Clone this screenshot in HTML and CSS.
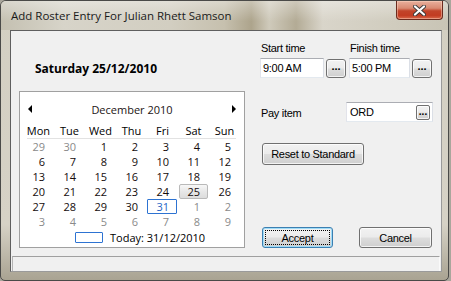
FILE: index.html
```html
<!DOCTYPE html>
<html lang="en">
<head>
    <meta charset="UTF-8">
    <title>Add Roster Entry</title>
    <link rel="stylesheet" href="styles.css">
</head>
<body>

    <div class="window">
        <div class="titlebar">
            <span class="title">Add Roster Entry For Julian Rhett Samson</span>
            <button class="close" type="button">
                <svg width="13" height="11" viewBox="0 0 13 11">
                    <path d="M2 1.5 L11 9.5 M11 1.5 L2 9.5" stroke="#3b3b3b" stroke-width="4" stroke-linecap="round"/>
                    <path d="M2 1.5 L11 9.5 M11 1.5 L2 9.5" stroke="#ffffff" stroke-width="2.2" stroke-linecap="round"/>
                </svg>
            </button>
        </div>

        <div class="client">
            <div class="main">
                <div class="left">
                    <div class="date-heading">Saturday 25/12/2010</div>

                    <div class="calendar">
                        <div class="cal-head">
                            <span class="arrow prev"></span>
                            <span class="month">December 2010</span>
                            <span class="arrow next"></span>
                        </div>
                        <div class="cal-dow">
                            <span>Mon</span><span>Tue</span><span>Wed</span><span>Thu</span><span>Fri</span><span>Sat</span><span>Sun</span>
                        </div>
                        <div class="cal-rule"></div>
                        <div class="cal-days">
                            <span class="day other">29</span><span class="day other">30</span><span class="day">1</span><span class="day">2</span><span class="day">3</span><span class="day">4</span><span class="day">5</span>
                            <span class="day">6</span><span class="day">7</span><span class="day">8</span><span class="day">9</span><span class="day">10</span><span class="day">11</span><span class="day">12</span>
                            <span class="day">13</span><span class="day">14</span><span class="day">15</span><span class="day">16</span><span class="day">17</span><span class="day">18</span><span class="day">19</span>
                            <span class="day">20</span><span class="day">21</span><span class="day">22</span><span class="day">23</span><span class="day">24</span><span class="day selected">25</span><span class="day">26</span>
                            <span class="day">27</span><span class="day">28</span><span class="day">29</span><span class="day">30</span><span class="day today">31</span><span class="day other">1</span><span class="day other">2</span>
                            <span class="day other">3</span><span class="day other">4</span><span class="day other">5</span><span class="day other">6</span><span class="day other">7</span><span class="day other">8</span><span class="day other">9</span>
                        </div>
                        <div class="cal-today">
                            <span class="today-box"></span>
                            <span>Today: 31/12/2010</span>
                        </div>
                    </div>
                </div>

                <div class="right">
                    <div class="times">
                        <div class="time-group">
                            <label>Start time</label>
                            <div class="picker">
                                <div class="field start-field">9:00 AM</div>
                                <button class="btn dots" type="button">...</button>
                            </div>
                        </div>
                        <div class="time-group">
                            <label>Finish time</label>
                            <div class="picker">
                                <div class="field finish-field">5:00 PM</div>
                                <button class="btn dots" type="button">...</button>
                            </div>
                        </div>
                    </div>

                    <div class="pay-row">
                        <label>Pay item</label>
                        <div class="field pay-field">
                            <span>ORD</span>
                            <button class="btn dots small" type="button">...</button>
                        </div>
                    </div>

                    <button class="btn reset" type="button">Reset to Standard</button>

                    <div class="actions">
                        <button class="btn default accept" type="button">Accept</button>
                        <button class="btn cancel" type="button">Cancel</button>
                    </div>
                </div>
            </div>
            <div class="statusbar"></div>
        </div>
    </div>

</body>
</html>
```

FILE: styles.css
```css
body {
    margin: 0;
    background-color: #a9a69c;
    font-family: 'Liberation Sans', Arial, sans-serif;
    font-size: 11px;
    color: #000;
}
button {
    font-family: inherit;
    font-size: inherit;
    color: #000;
    padding: 0;
    margin: 0;
    cursor: default;
}

/* window frame */
.window {
    box-sizing: border-box;
    width: 449px;
    height: 281px;
    border: 1px solid #4a4a48;
    border-radius: 6px 6px 5px 5px;
    background: linear-gradient(180deg, #d3cfc2 0%, #d6d2c6 80%, #a9a392 100%);
    display: flex;
    flex-direction: column;
    overflow: hidden;
}
.titlebar {
    height: 29px;
    flex-shrink: 0;
    display: flex;
    justify-content: space-between;
    align-items: flex-start;
    padding-left: 10px;
    padding-right: 5px;
    background:
        linear-gradient(180deg, rgba(255, 255, 255, 0.35) 0%, rgba(255, 255, 255, 0) 70%),
        linear-gradient(90deg, #c4c0b1 0%, #d7d4c9 14%, #d2cec1 38%, #c6c0ae 50%, #ada48c 56%, #cfcabb 60%, #b3ab95 66%, #d9d5ca 72%, #d0ccbe 88%, #c8c4b5 100%);
}
.title {
    font-family: 'Open Sans', sans-serif;
    font-size: 11.5px;
    line-height: 15px;
    padding-top: 7px;
    color: #1a1a1a;
}
.close {
    width: 47px;
    height: 19px;
    border: 1px solid #6b2b1e;
    border-top: none;
    border-radius: 0 0 4px 4px;
    background: linear-gradient(180deg, #e9b09d 0%, #d88a72 40%, #c2442a 55%, #c23c22 80%, #d9694b 100%);
    box-shadow: inset 0 0 0 1px rgba(255, 220, 200, 0.45);
    display: flex;
    align-items: center;
    justify-content: center;
}

/* client area */
.client {
    box-sizing: border-box;
    width: 432px;
    height: 242px;
    margin-left: 9px;
    border: 1px solid #5f5f5f;
    border-right-color: #9a9a9a;
    border-bottom-color: #9a9a9a;
    background-color: #f0f0f0;
    display: flex;
    flex-direction: column;
}
.main {
    height: 225px;
    display: flex;
}
.statusbar {
    box-sizing: border-box;
    height: 15px;
    margin: 0 1px;
    border-top: 1px solid #a0a0a0;
    border-left: 1px solid #b4b4b4;
    border-right: 1px solid #fafafa;
}

/* left column */
.left {
    width: 249px;
    flex-shrink: 0;
    padding-top: 30px;
}
.date-heading {
    font-family: 'Open Sans', sans-serif;
    font-weight: bold;
    font-size: 12px;
    line-height: 16px;
    padding-left: 24px;
    margin-bottom: 14px;
}
.calendar {
    box-sizing: border-box;
    width: 226px;
    margin-left: 8px;
    border: 1px solid #a0a0a0;
    background-color: #fff;
    font-family: 'Open Sans', sans-serif;
    font-size: 11px;
    padding-bottom: 3px;
}
.cal-head {
    display: flex;
    justify-content: space-between;
    align-items: center;
    height: 17px;
    padding: 9px 8px 0 8px;
}
.month {
    line-height: 17px;
    color: #1c1414;
}
.arrow {
    width: 0;
    height: 0;
    border-top: 4px solid transparent;
    border-bottom: 4px solid transparent;
    margin-top: -2px;
}
.arrow.prev {
    border-right: 4px solid #000;
}
.arrow.next {
    border-left: 4px solid #000;
}
.cal-dow, .cal-days {
    display: grid;
    grid-template-columns: repeat(7, 31px);
    padding-left: 3px;
}
.cal-dow {
    margin-top: 5px;
}
.cal-dow span {
    text-align: center;
    line-height: 15px;
}
.cal-rule {
    height: 1px;
    margin: 0 8px 0 7px;
    background-color: #e2e2e2;
}
.day {
    box-sizing: border-box;
    height: 15px;
    line-height: 15px;
    text-align: right;
    padding-right: 9px;
    color: #140c0c;
}
.day.other {
    color: #8a8a8a;
}
.day.selected {
    margin: 0 1px;
    padding-right: 7px;
    line-height: 13px;
    border: 1px solid #b9b9b9;
    border-radius: 2px;
    background: linear-gradient(180deg, #f7f7f7 0%, #e7e7e7 50%, #dcdcdc 100%);
}
.day.today {
    margin-right: 1px;
    padding-right: 7px;
    line-height: 13px;
    border: 1px solid #2d73d2;
    border-radius: 1px;
    color: #1d63c5;
}
.cal-today {
    display: flex;
    align-items: center;
    gap: 7px;
    height: 14px;
    margin-top: 1px;
    padding-left: 55px;
}
.today-box {
    box-sizing: border-box;
    width: 28px;
    height: 11px;
    border: 1px solid #2d73d2;
    border-radius: 1px;
}

/* right column */
.right {
    flex: 1;
    display: flex;
    flex-direction: column;
    padding-top: 10px;
    padding-bottom: 8px;
    letter-spacing: -0.3px;
}
.times {
    display: flex;
    gap: 3px;
}
.time-group {
    display: flex;
    flex-direction: column;
    gap: 3px;
}
.time-group label {
    line-height: 14px;
    padding-left: 1px;
}
.picker {
    display: flex;
    align-items: center;
    gap: 2px;
}
.field {
    box-sizing: border-box;
    height: 20px;
    line-height: 18px;
    padding-left: 2px;
    background-color: #fff;
    border: 1px solid;
    border-color: #abadb3 #dbdfe6 #e3e9ef #e2e3ea;
}
.start-field {
    width: 64px;
}
.finish-field {
    width: 61px;
}
.btn {
    box-sizing: border-box;
    border: 1px solid #707070;
    border-radius: 3px;
    background: linear-gradient(180deg, #f2f2f2 0%, #ebebeb 48%, #dddddd 52%, #cfcfcf 100%);
    box-shadow: inset 0 0 0 1px rgba(255, 255, 255, 0.75);
    letter-spacing: -0.3px;
}
.btn.dots {
    width: 20px;
    height: 19px;
    font-weight: bold;
    line-height: 12px;
    letter-spacing: 0;
    padding-bottom: 4px;
}
.pay-row {
    display: flex;
    align-items: center;
    margin-top: 24px;
}
.pay-row label {
    width: 85px;
    padding-left: 1px;
    margin-top: 1px;
}
.pay-field {
    width: 87px;
    display: flex;
    justify-content: space-between;
    align-items: center;
    padding-left: 3px;
    padding-right: 2px;
}
.btn.dots.small {
    width: 14px;
    height: 15px;
    border-radius: 2px;
    font-size: 10px;
    padding-bottom: 5px;
    margin-top: 1px;
}
.reset {
    width: 102px;
    height: 22px;
    margin-top: 21px;
    margin-left: 2px;
}
.actions {
    display: flex;
    gap: 26px;
    margin-top: auto;
    margin-left: 2px;
}
.accept {
    width: 71px;
    height: 21px;
}
.cancel {
    width: 73px;
    height: 21px;
}
.btn.default {
    border-color: #3c7fb1;
    box-shadow: inset 0 0 0 1px #9fdcf8;
    outline: 1px dotted #000;
    outline-offset: -4px;
}
```
